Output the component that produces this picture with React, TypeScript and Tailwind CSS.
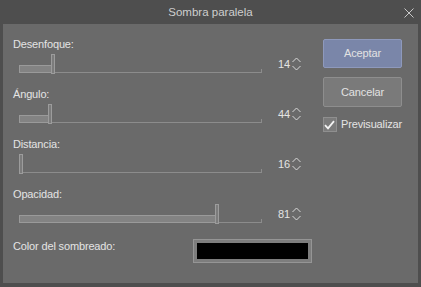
import React from 'react';

// slider values and thumb offsets (px from track start)
const sliders = [
  { label: 'Desenfoque:', value: 14, pos: 32 },
  { label: 'Ángulo:', value: 44, pos: 29 },
  { label: 'Distancia:', value: 16, pos: 0 },
  { label: 'Opacidad:', value: 81, pos: 196 },
];

function Spinner() {
  return (
    <svg width="9" height="14" viewBox="0 0 9 14" className="ml-[2px]">
      <path d="M0.5 5 L4.5 1 L8.5 5" fill="none" stroke="#d8d8d8" strokeWidth="1" />
      <path d="M0.5 9 L4.5 13 L8.5 9" fill="none" stroke="#d8d8d8" strokeWidth="1" />
    </svg>
  );
}

function Slider({ pos }: { pos: number }) {
  return (
    <div className="relative w-[243px] h-[20px]">
      {/* track */}
      <div className="absolute left-0 right-0 top-[18px] h-px bg-[#8c8c8c]" />
      <div className="absolute right-0 top-[15px] w-px h-[4px] bg-[#8c8c8c]" />
      {/* filled part */}
      {pos > 0 && (
        <div
          className="absolute left-0 top-[11px] h-[8px] bg-[#838383] border border-[#9a9a9a]"
          style={{ width: pos + 1 }}
        />
      )}
      {/* thumb */}
      <div
        className="absolute top-0 w-[4px] h-[20px] bg-[#7c7c7c] border border-[#9c9c9c]"
        style={{ left: pos }}
      />
    </div>
  );
}

export default function App() {
  return (
    <div
      className="w-[421px] h-[287px] bg-[#4e4e4e] flex flex-col text-[#e4e4e4] text-[11px] leading-[13px] tracking-[-0.15px]"
      style={{ fontFamily: '"Liberation Sans", Arial, sans-serif' }}
    >
      {/* Title bar */}
      <div className="relative h-[24px] flex items-center justify-center">
        <span className="text-[11.5px] text-[#cfcfcf] pt-[1px] tracking-normal">Sombra paralela</span>
        <svg width="10" height="10" viewBox="0 0 10 10" className="absolute right-[7px] top-[8px]">
          <path d="M0.5 0.5 L9.5 9.5 M9.5 0.5 L0.5 9.5" stroke="#c8c8c8" strokeWidth="1" />
        </svg>
      </div>

      {/* Body */}
      <div className="flex-1 mx-[3px] mb-[4px] bg-[#6a6a6a] flex">
        <div className="w-[320px] pl-[10px] pt-[14px]">
          {sliders.map((s) => (
            <div key={s.label} className="mb-[14px]">
              <div className="h-[13px]">{s.label}</div>
              <div className="mt-[3px] flex items-center ml-[6px]">
                <Slider pos={s.pos} />
                <span className="w-[24px] ml-[4px] text-right">{s.value}</span>
                <Spinner />
              </div>
            </div>
          ))}
          <div className="flex items-start">
            <div className="w-[180px] mt-[2px]">Color del sombreado:</div>
            <div className="mt-[1px] w-[119px] h-[24px] border border-[#959595] bg-[#7d7d7d] p-[3px]">
              <div className="w-full h-full bg-black" />
            </div>
          </div>
        </div>

        <div className="w-[79px] pt-[15px] flex flex-col">
          <button className="h-[29px] bg-[#7a86a9] border border-[#8e99bc] rounded-[2px] text-[#e2e2e2] text-[11px]">
            Aceptar
          </button>
          <button className="mt-[9px] h-[30px] bg-[#7a7a7a] border border-[#8e8e8e] rounded-[2px] text-[#e2e2e2] text-[11px]">
            Cancelar
          </button>
          <div className="mt-[10px] flex items-center">
            <div className="w-[15px] h-[15px] bg-[#7b7b7b] border border-[#8f8f8f] flex items-center justify-center">
              <svg width="11" height="10" viewBox="0 0 11 10">
                <path d="M1 5.2 L4 8.3 L10 1.2" fill="none" stroke="#f4f4f4" strokeWidth="1.8" />
              </svg>
            </div>
            <span className="ml-[4px]">Previsualizar</span>
          </div>
        </div>
      </div>
    </div>
  );
}
